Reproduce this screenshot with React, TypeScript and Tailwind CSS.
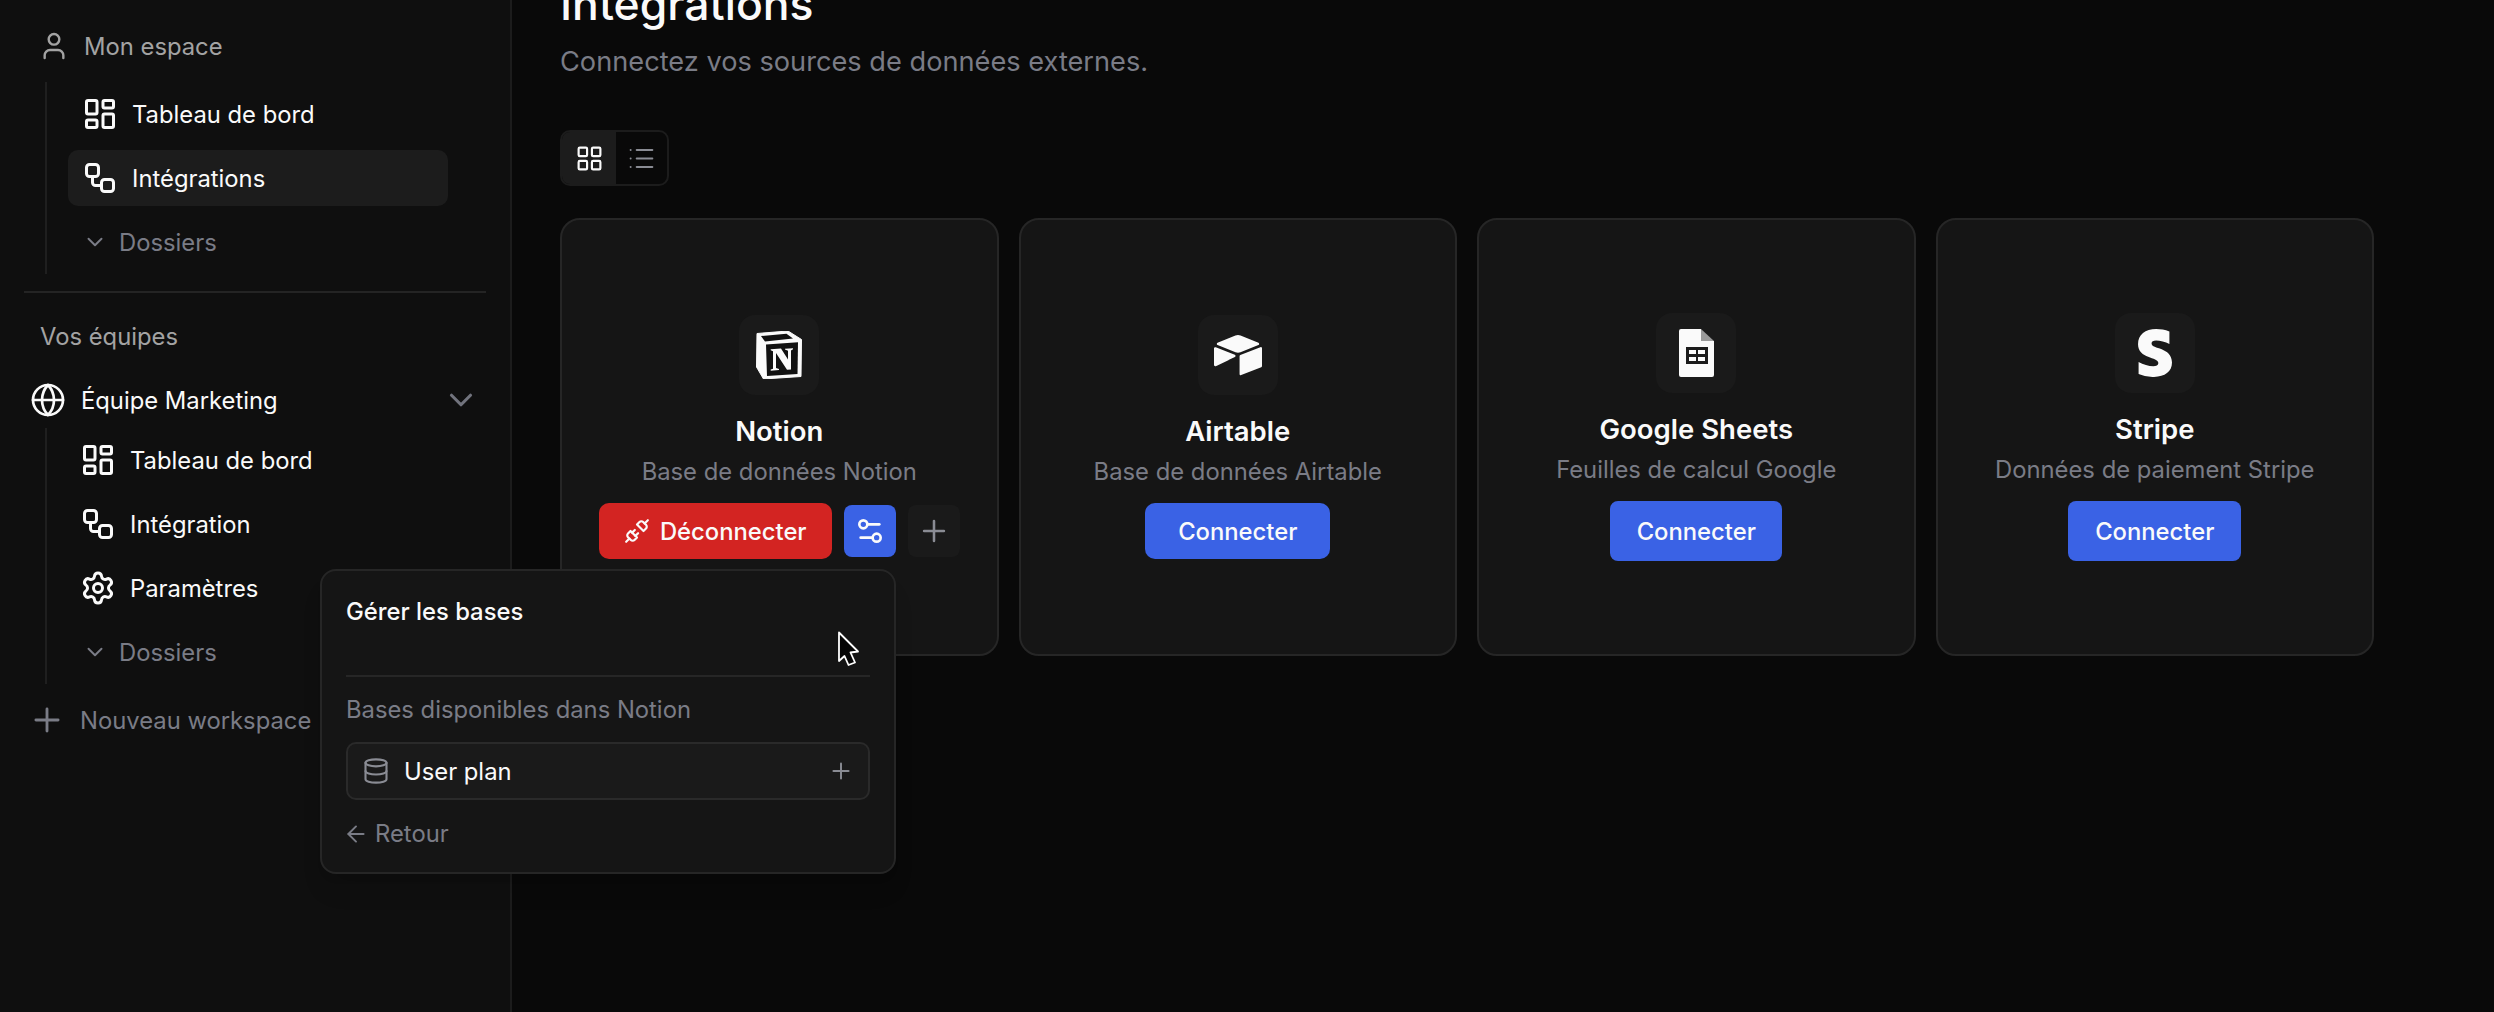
import React from 'react';
import {
    ArrowLeft,
    ChevronDown,
    Database,
    Globe,
    LayoutDashboard,
    LayoutGrid,
    List,
    Plus,
    Settings,
    Settings2,
    Unplug,
    User,
    Workflow,
} from 'lucide-react';
import { SiAirtable } from 'react-icons/si';
import { FaStripeS } from 'react-icons/fa';

const NotionIcon = () => (
    <svg width="46" height="48" viewBox="0 0 46 48">
        <path d="M1 2.5L32 0L45.5 8.5L45 45.5L7.5 48L0.5 36Z" fill="#fafafa" stroke="#fafafa" strokeLinejoin="round" />
        <path d="M5 5L30.5 2.8L37 7.5L9 10.5Z" fill="#111111" />
        <path d="M10 13.5L42 11.2L41.5 43L11 45Z" fill="#111111" />
        <path
            d="M14.7 18.3L25 17.5L32 28.5V19.8L29 18.6V17.7L37 17.2V18.3L35 19.4V38.5L31 38.8L20 22V37L23 38V39L14.7 39.7V38.6L17 37.8V20.2L14.7 19.3Z"
            fill="#fafafa"
        />
    </svg>
);

const SheetsIcon = () => (
    <svg width="35" height="48" viewBox="0 0 35 48">
        <path d="M2 0H22V12H35V46a2 2 0 0 1-2 2H2a2 2 0 0 1-2-2V2a2 2 0 0 1 2-2z" fill="#fafafa" />
        <path d="M22 0L35 12H22z" fill="#9a9a9a" />
        <rect x="7" y="18" width="22" height="17" fill="#1b1b1b" />
        <rect x="10" y="21" width="7" height="4" fill="#fafafa" />
        <rect x="19" y="21" width="7" height="4" fill="#fafafa" />
        <rect x="10" y="28" width="7" height="4" fill="#fafafa" />
        <rect x="19" y="28" width="7" height="4" fill="#fafafa" />
    </svg>
);

const SubRow = ({ icon, label, active, pad }: { icon: React.ReactNode; label: string; active?: boolean; pad: string }) => (
    <div className="h-16 flex items-center">
        <div className={`h-14 w-[380px] flex items-center rounded-[10px] ml-[21px] text-[23.8px] text-[#fafafa] ${pad} ${active ? 'bg-[#1c1c1c]' : ''}`}>
            {icon}
            <span className="pt-0.5">{label}</span>
        </div>
    </div>
);

const Dossiers = () => (
    <div className="h-16 flex items-center pl-[35px] text-[23.8px] text-[#7a7c86]">
        <ChevronDown size={26} strokeWidth={1.8} className="mr-[11px]" />
        <span className="pt-0.5">Dossiers</span>
    </div>
);

const navIcon = 'mr-[14px] text-[#fafafa]';

const Sidebar = () => (
    <aside className="w-[512px] h-[1012px] shrink-0 bg-[#0f0f0f] border-r-2 border-[#1c1c1c] pt-[14px]">
        <div className="h-16 flex items-center pl-[38px] text-[23.8px] text-[#a3a3a3]">
            <User size={32} strokeWidth={1.8} className="mr-[14px]" />
            <span className="pt-0.5">Mon espace</span>
        </div>
        <div className="mt-1 ml-[45px] border-l-2 border-[#1f1f1f]">
            <SubRow pad="pl-[14px]" label="Tableau de bord" icon={<LayoutDashboard size={36} strokeWidth={2} className={navIcon} />} />
            <SubRow pad="pl-[14px]" active label="Intégrations" icon={<Workflow size={36} strokeWidth={2} className={navIcon} />} />
            <Dossiers />
        </div>
        <div className="mt-[17px] ml-6 mr-6 h-0.5 bg-[#242424]" />
        <div className="mt-[29px] pl-10 text-[23.8px] leading-[30px] text-[#a3a3a3]">Vos équipes</div>
        <div className="mt-[16px] h-16 flex items-center pl-[30px] pr-[30px] text-[23.8px] text-[#fafafa]">
            <Globe size={36} strokeWidth={1.8} className="mr-[15px]" />
            <span className="flex-1 pt-0.5">Équipe Marketing</span>
            <ChevronDown size={38} strokeWidth={2} className="text-[#71737d]" />
        </div>
        <div className="-mt-1 ml-[45px] border-l-2 border-[#1f1f1f]">
            <SubRow pad="pl-[12px]" label="Tableau de bord" icon={<LayoutDashboard size={36} strokeWidth={2} className={navIcon} />} />
            <SubRow pad="pl-[12px]" label="Intégration" icon={<Workflow size={36} strokeWidth={2} className={navIcon} />} />
            <SubRow pad="pl-[12px]" label="Paramètres" icon={<Settings size={36} strokeWidth={2} className={navIcon} />} />
            <Dossiers />
        </div>
        <div className="h-[72px] flex items-center pl-[28px] text-[23.8px] text-[#7a7c86]">
            <Plus size={38} strokeWidth={1.8} className="mr-[14px]" />
            <span className="pt-0.5">Nouveau workspace</span>
        </div>
    </aside>
);

const ConnectButton = ({ className }: { className: string }) => (
    <button className={`bg-[#3a62e5] text-[#fafafa] text-[23.8px] font-medium pt-0.5 ${className}`}>Connecter</button>
);

const Card = ({ icon, name, desc, children }: { icon: React.ReactNode; name: string; desc: string; children: React.ReactNode }) => (
    <div className="h-[438px] rounded-[20px] bg-[#151515] border-2 border-[#262626] flex flex-col items-center justify-center">
        <div className="w-20 h-20 rounded-2xl bg-[#1a1a1a] flex items-center justify-center text-[#fafafa]">{icon}</div>
        <div className="mt-[18px] text-[27.5px] leading-9 font-semibold text-[#fafafa]">{name}</div>
        <div className="mt-[7px] text-[23.8px] leading-8 text-[#7a7c86]">{desc}</div>
        <div className="mt-[15px] flex items-center">{children}</div>
    </div>
);

const Popover = () => (
    <div className="absolute left-[320px] top-[569px] w-[576px] h-[305px] rounded-2xl bg-[#151515] border-2 border-[#262626] px-[24px] pt-[23px] shadow-xl">
        <div className="text-[23.8px] leading-9 font-medium text-[#fafafa]">Gérer les bases</div>
        <div className="mt-[45px] h-0.5 bg-[#262626]" />
        <div className="mt-[17px] text-[23.8px] leading-8 text-[#7a7c86]">Bases disponibles dans Notion</div>
        <div className="mt-[16px] h-[58px] rounded-[10px] bg-[#1a1a1a] border-2 border-[#2a2a2a] flex items-center pl-[14px] pr-[14px] text-[23.8px] text-[#fafafa]">
            <Database size={28} strokeWidth={1.8} className="mr-[14px] text-[#8a8c94]" />
            <span className="flex-1 pt-0.5">User plan</span>
            <Plus size={26} strokeWidth={1.8} className="text-[#8a8c94]" />
        </div>
        <div className="mt-[18px] flex items-center text-[23.8px] leading-8 text-[#7a7c86]">
            <ArrowLeft size={26} strokeWidth={1.8} className="-ml-[3px] mr-[6px]" />
            <span>Retour</span>
        </div>
    </div>
);

const Cursor = () => (
    <svg className="absolute left-[838px] top-[631px]" width="22" height="36" viewBox="0 0 22 36">
        <path
            d="M1 1.5L20 20.5L12.5 21.5L17 31.5L10.5 34L6.5 25L1 30Z"
            fill="#050505"
            stroke="#fff"
            strokeWidth="1.8"
            strokeLinejoin="round"
        />
    </svg>
);

export default function App() {
    return (
        <div className="relative w-[2494px] h-[1012px] overflow-hidden flex bg-[#090909] font-['Inter',sans-serif]">
            <Sidebar />
            <main className="flex-1 pl-[48px] pr-[120px]">
                <h1 className="-mt-[24px] text-[44.5px] leading-[56px] font-medium text-[#fafafa]">Intégrations</h1>
                <p className="mt-[12px] text-[27.2px] leading-9 text-[#7a7c86]">Connectez vos sources de données externes.</p>

                <div className="mt-[50px] w-[109px] h-14 flex rounded-[10px] border-2 border-[#1c1c1c] overflow-hidden">
                    <div className="w-[54px] bg-[#1c1c1c] flex items-center justify-center text-[#fafafa]">
                        <LayoutGrid size={29} strokeWidth={1.8} />
                    </div>
                    <div className="flex-1 flex items-center justify-center text-[#8a8c94]">
                        <List size={29} strokeWidth={1.6} />
                    </div>
                </div>

                <div className="mt-8 grid grid-cols-4 gap-5">
                    <Card icon={<NotionIcon />} name="Notion" desc="Base de données Notion">
                        <button className="h-14 w-[233px] rounded-[10px] bg-[#d32422] text-[#fafafa] text-[23.8px] font-medium flex items-center justify-center">
                            <Unplug size={26} strokeWidth={2} className="mr-[10px]" />
                            <span className="pt-0.5">Déconnecter</span>
                        </button>
                        <div className="ml-3 w-[52px] h-[52px] rounded-lg bg-[#3a62e5] flex items-center justify-center text-[#fafafa]">
                            <Settings2 size={32} strokeWidth={2} />
                        </div>
                        <div className="ml-3 w-[52px] h-[52px] rounded-lg bg-[#1a1a1a] flex items-center justify-center text-[#8a8c94]">
                            <Plus size={34} strokeWidth={1.8} />
                        </div>
                    </Card>
                    <Card icon={<SiAirtable size={48} />} name="Airtable" desc="Base de données Airtable">
                        <ConnectButton className="h-14 w-[185px] rounded-[10px]" />
                    </Card>
                    <Card icon={<SheetsIcon />} name="Google Sheets" desc="Feuilles de calcul Google">
                        <ConnectButton className="h-[60px] w-[172px] rounded-lg" />
                    </Card>
                    <Card icon={<FaStripeS size={48} />} name="Stripe" desc="Données de paiement Stripe">
                        <ConnectButton className="h-[60px] w-[173px] rounded-lg" />
                    </Card>
                </div>
            </main>
            <Popover />
            <Cursor />
        </div>
    );
}
